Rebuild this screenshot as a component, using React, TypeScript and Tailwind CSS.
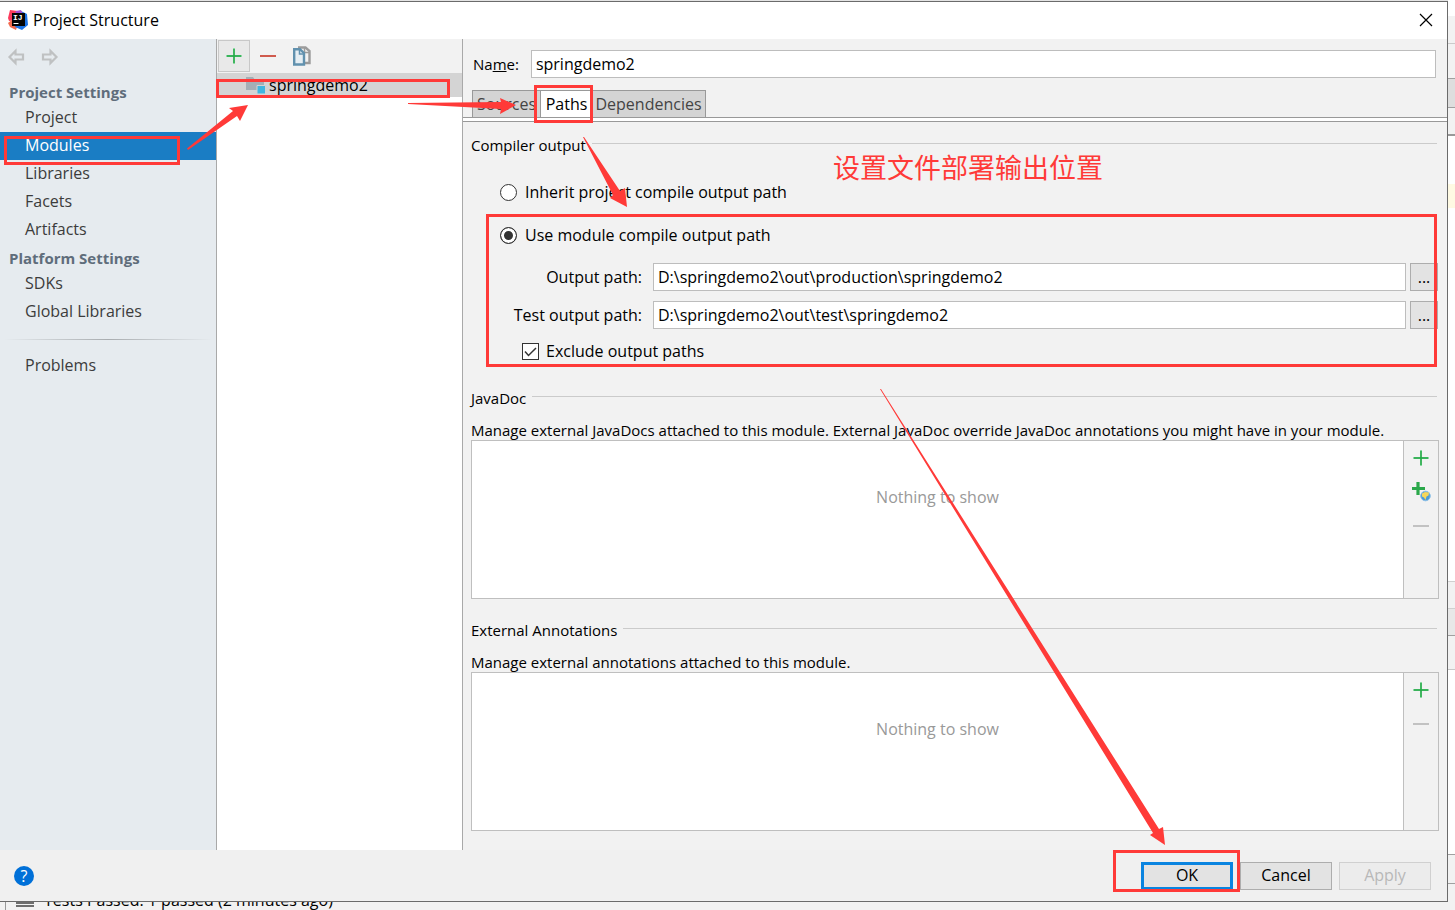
import React, { useState } from 'react';

const inputClass = 'h-7 min-w-0 flex-1 border border-[#bdbdbd] bg-white px-1 text-base text-black outline-none';

const PlusIcon: React.FC = () => (
  <svg width="16" height="16" viewBox="0 0 16 16" aria-hidden="true">
    <path d="M8 0v16M0 8h16" stroke="#8fd9a4" strokeWidth="2" />
    <path d="M8 1v14M1 8h14" stroke="#21a744" strokeWidth="1.4" />
  </svg>
);

const MinusIcon: React.FC<{ color: string }> = ({ color }) => (
  <svg width="16" height="16" viewBox="0 0 16 16" aria-hidden="true">
    <path d="M0 8h16" stroke={color} strokeWidth="2" />
  </svg>
);

const PlusGlobeIcon: React.FC = () => (
  <svg width="20" height="20" viewBox="0 0 20 20" aria-hidden="true">
    <path d="M7 0v13M1 6.5h13" stroke="#2ba84b" strokeWidth="3.2" />
    <circle cx="14.5" cy="14" r="4.800" fill="#4b9bd8" stroke="#8bbfe6" />
    <path d="M11 11.500l3-1.500 4 .5-.5 3-2 1-1 3.500-1.500-2.500-2-1z" fill="#f6d75b" />
  </svg>
);

const CopyIcon: React.FC = () => (
  <svg width="20" height="20" viewBox="0 0 20 20" aria-hidden="true">
    <path d="M6 1.500h7.500L17.500 5v12H12" fill="#f2f2f2" stroke="#9b9b9b" strokeWidth="2.400" />
    <path d="M12.500 2v4.500H17" fill="none" stroke="#9b9b9b" strokeWidth="1.500" />
    <path d="M2.200 3.200H8l4 4v11.300H2.200z" fill="#e6eef3" stroke="#6191ae" strokeWidth="2.400" />
    <path d="M7.500 4v4H12" fill="none" stroke="#6191ae" strokeWidth="1.500" />
  </svg>
);

const ArrowIcon: React.FC<{ flip?: boolean }> = ({ flip }) => (
  <svg width="18" height="18" viewBox="0 0 18 18" className={flip ? 'rotate-180' : ''} aria-hidden="true">
    <path d="M2.500 9L8.500 3v3.500h7.500v5H8.500V15z" fill="none" stroke="#bfc1c2" strokeWidth="2.200" />
  </svg>
);

const LogoIcon: React.FC = () => (
  <svg width="20" height="20" viewBox="0 0 20 20" aria-hidden="true">
    <path d="M2 0l8 1-2 9-7 1-1-3z" fill="#fc3a5c" />
    <path d="M0 13l5-4 4 8-1 3-6-3z" fill="#f26b4e" />
    <path d="M13 1l6 3 1 11-6 5-7-3z" fill="#1b74e8" />
    <path d="M8 1l5-1 2 4H7z" fill="#a54fd1" />
    <rect x="4" y="3" width="13" height="13" fill="#050505" />
    <text x="5" y="10" fill="#fff" fontSize="8" fontWeight="bold" fontFamily="Liberation Mono, monospace">IJ</text>
    <path d="M5.500 13.500h5" stroke="#fff" />
  </svg>
);

const FolderIcon: React.FC = () => (
  <svg width="20" height="18" viewBox="0 0 20 18" aria-hidden="true">
    <path d="M0 1h7l2 3h9v10H0z" fill="#a4afb6" />
    <path d="M11 9.500h8.500V18H11z" fill="#40b6e0" stroke="#d4d4d4" />
  </svg>
);

const sections = [
  { title: 'Project Settings', items: ['Project', 'Modules', 'Libraries', 'Facets', 'Artifacts'] },
  { title: 'Platform Settings', items: ['SDKs', 'Global Libraries'] },
];

const NavItem: React.FC<{ label: string; active?: boolean; onClick: () => void }> = ({ label, active, onClick }) => (
  <button
    type="button"
    onClick={onClick}
    className={`flex h-7 w-full items-center pb-0.5 pl-[25px] text-left ${active ? 'bg-[#1a7dc4] text-white' : 'text-[#3c3c3c]'}`}
  >
    {label}
  </button>
);

const GroupTitle: React.FC<{ children: React.ReactNode }> = ({ children }) => (
  <div className="flex h-6 items-center gap-1.5 pr-0.5">
    <h2 className="text-[15px] leading-5">{children}</h2>
    <div className="mb-[3px] h-px flex-1 bg-[#cbcbcb]" />
  </div>
);

const Description: React.FC<{ children: React.ReactNode }> = ({ children }) => (
  <p className="mt-2.5 text-[15px] leading-5">{children}</p>
);

const EmptyList: React.FC<{ withUrl?: boolean }> = ({ withUrl }) => (
  <div className="flex h-[159px] border border-[#bfbfbf]">
    <div className="flex-1 bg-white pt-[46px] text-center text-[#999999]">Nothing to show</div>
    <div className="flex w-[35px] flex-col items-center border-l border-[#bfbfbf]">
      <button type="button" aria-label="Add" className="flex h-[34px] items-center"><PlusIcon /></button>
      {withUrl && <button type="button" aria-label="Add URL" className="flex h-[34px] items-center"><PlusGlobeIcon /></button>}
      <button type="button" aria-label="Remove" disabled className="flex h-[34px] items-center"><MinusIcon color="#c2c2c2" /></button>
    </div>
  </div>
);

const Annotations: React.FC = () => (
  <div className="pointer-events-none absolute inset-0 text-[#ff3a38]">
    <svg width="1455" height="910" viewBox="0 0 1455 910" aria-hidden="true">
      <g fill="none" stroke="currentColor" strokeWidth="3">
        <rect x="5.5" y="137.5" width="173" height="26" />
        <rect x="217.5" y="80.500" width="231" height="16" />
        <rect x="535.5" y="86.500" width="56" height="35" />
        <rect x="487.5" y="215.500" width="948" height="150" />
        <rect x="1114.500" y="851.500" width="124" height="39" />
      </g>
      <g fill="currentColor">
        <path d="M187 148.500L233 111l-4-3 19-3-8 16-3-5-49 34z" />
        <path d="M408 103l93-1-1-4 16 7-16 9 1-5-93-5z" />
        <path d="M583 137h1l36 54 5-3 2 19-17-9 3-3z" />
        <path d="M880 389h1l278 440 4-2 2 18-15-10 3-2z" />
      </g>
    </svg>
    <p className="absolute top-[147px] left-[833px] font-['Noto_Sans_CJK_SC',sans-serif] text-[27px] leading-10">设置文件部署输出位置</p>
  </div>
);

// slice of the editor that stays visible beside the dialog
const EditorEdge: React.FC = () => (
  <div className="flex w-[7px] flex-col bg-white">
    <div className="h-4" />
    <div className="h-7 border-b border-[#cbcbcb] bg-[#f2f2f2]" />
    <div className="h-[34px] bg-[#f2f2f2]" />
    <div className="h-[30px] border-y border-[#a0a0a0] bg-[#dedede]" />
    <div className="h-7 border-b-2 border-[#999999] bg-[#f2f2f2]" />
    <div className="h-12" />
    <div className="h-6 bg-[#fffae3]" />
    <div className="h-[373px]" />
    <div className="h-7 border-y border-[#d0d0d0] bg-[#f2f2f2]" />
    <div className="h-[27px] border-b border-[#a0a0a0] bg-[#e8e8e8]" />
    <div className="h-[34px] border-b border-[#c8c8c8] bg-[#f2f2f2]" />
    <div className="flex-1" />
    <div className="h-[30px] border-y border-[#a0a0a0] bg-[#f2f2f2]" />
    <div className="h-[26px] bg-[#f2f2f2]" />
  </div>
);

const App: React.FC = () => {
  const [page, setPage] = useState('Modules');
  const [name, setName] = useState('springdemo2');
  const [mode, setMode] = useState<'inherit' | 'module'>('module');
  const [output, setOutput] = useState('D:\\springdemo2\\out\\production\\springdemo2');
  const [testOutput, setTestOutput] = useState('D:\\springdemo2\\out\\test\\springdemo2');
  const [exclude, setExclude] = useState(true);

  const radioClass =
    'h-[17px] w-[17px] appearance-none rounded-full border border-[#333333] bg-white checked:bg-[#333333] checked:shadow-[inset_0_0_0_3px_white]';
  const browseClass = 'h-7 w-7 border border-[#adadad] bg-[#e3e3e3] text-center';

  return (
    <div className="relative flex min-h-screen overflow-hidden bg-[#f2f2f2] font-['Open_Sans','Noto_Sans',sans-serif] text-base leading-5 text-black">
      <div className="flex min-w-0 flex-1 flex-col">
        <div className="h-px bg-[#e4e4e4]" />
        <div className="flex flex-1 flex-col border-t border-r border-b border-[#6b6b6b]">
          {/* Title bar */}
          <header className="flex h-[37px] items-center gap-[5px] bg-white pr-3.5 pb-0.5 pl-2">
            <LogoIcon />
            <h1 className="flex-1 text-base leading-5">Project Structure</h1>
            <button type="button" aria-label="Close">
              <svg width="14" height="14" viewBox="0 0 14 14">
                <path d="M1 1l12 12M13 1L1 13" stroke="#000" strokeWidth="1.200" />
              </svg>
            </button>
          </header>

          <div className="flex flex-1">
            {/* Sidebar */}
            <nav className="flex w-[217px] shrink-0 flex-col border-r border-[#a9a9a9] bg-[#e6ebef]">
              <div className="flex h-[39px] gap-4 pt-[9px] pl-[7px]">
                <button type="button" aria-label="Back" className="h-[18px]"><ArrowIcon /></button>
                <button type="button" aria-label="Forward" className="h-[18px]"><ArrowIcon flip /></button>
              </div>
              {sections.map((section) => (
                <div key={section.title}>
                  <h2 className="flex h-[26px] items-center pt-0.5 pl-[9px] text-[15px] font-bold text-[#5f6d7b]">{section.title}</h2>
                  {section.items.map((item) => (
                    <NavItem key={item} label={item} active={page === item} onClick={() => setPage(item)} />
                  ))}
                </div>
              ))}
              <div className="mx-1 mt-[13px] mb-3 h-px bg-linear-to-r from-transparent via-[#a9adb0] to-transparent" />
              <NavItem label="Problems" active={page === 'Problems'} onClick={() => setPage('Problems')} />
            </nav>

            {/* Module list */}
            <div className="w-[246px] shrink-0 border-r border-[#a9a9a9] bg-white">
              <div className="flex h-[34px] items-center bg-[#f2f2f2] pl-px">
                <button type="button" aria-label="Add module" className="flex h-8 w-8 items-center justify-center border border-[#c8c8c8] bg-[#e9e9e9]">
                  <PlusIcon />
                </button>
                <button type="button" aria-label="Remove module" className="ml-2.5"><MinusIcon color="#d05b4e" /></button>
                <button type="button" aria-label="Copy module" className="ml-4"><CopyIcon /></button>
              </div>
              <button type="button" className="flex h-6 w-full items-center gap-[3px] bg-[#d4d4d4] pl-[29px]">
                <FolderIcon />
                {name}
              </button>
            </div>

            {/* Module settings */}
            <main className="flex min-w-0 flex-1 flex-col">
              <div className="flex items-center gap-3 pt-[11px] pr-[11px] pl-[10px]">
                <label htmlFor="name" className="text-[15px]">Na<u>m</u>e:</label>
                <input id="name" className={inputClass} value={name} onChange={(e) => setName(e.target.value)} />
              </div>
              <div role="tablist" className="mt-3 flex h-[27px] pl-[9px] text-[#444444]">
                <button type="button" role="tab" className="w-[68px] border-t border-l border-[#999999] bg-[#d4d4d4]">Sources</button>
                <button type="button" role="tab" aria-selected="true" className="w-[52px] border-t border-l border-[#999999] bg-white text-black">Paths</button>
                <button type="button" role="tab" className="w-[114px] border-t border-r border-[#999999] bg-[#d4d4d4]">Dependencies</button>
              </div>
              <div className="h-[5px] border-y border-[#999999] bg-white" />

              <div className="px-2 pt-[11px]">
                <GroupTitle>Compiler output</GroupTitle>
                <div className="mt-[21px] space-y-[15px] pl-[29px]">
                  <label className="flex h-7 items-center gap-2">
                    <input type="radio" name="mode" className={radioClass} checked={mode === 'inherit'} onChange={() => setMode('inherit')} />
                    Inherit project compile output path
                  </label>
                  <label className="flex h-7 items-center gap-2">
                    <input type="radio" name="mode" className={radioClass} checked={mode === 'module'} onChange={() => setMode('module')} />
                    Use module compile output path
                  </label>
                </div>
                <div className="mt-3.5 flex items-center gap-1 pr-px">
                  <label htmlFor="output" className="w-[171px] text-right">Output path:</label>
                  <input id="output" className={`ml-[7px] ${inputClass}`} value={output} onChange={(e) => setOutput(e.target.value)} />
                  <button type="button" aria-label="Browse output path" className={browseClass}>...</button>
                </div>
                <div className="mt-2.5 flex items-center gap-1 pr-px">
                  <label htmlFor="testOutput" className="w-[171px] text-right">Test output path:</label>
                  <input id="testOutput" className={`ml-[7px] ${inputClass}`} value={testOutput} onChange={(e) => setTestOutput(e.target.value)} />
                  <button type="button" aria-label="Browse test output path" className={browseClass}>...</button>
                </div>
                <label className="mt-3 flex h-5 items-center gap-[7px] pl-[51px]">
                  <span className="relative flex">
                    <input type="checkbox" className="h-[17px] w-[17px] appearance-none border border-[#333333] bg-white" checked={exclude} onChange={(e) => setExclude(e.target.checked)} />
                    {exclude && (
                      <svg className="pointer-events-none absolute inset-0" width="17" height="17" viewBox="0 0 17 17">
                        <path d="M3 8.500l3.500 4L14 5" fill="none" stroke="#333" strokeWidth="1.500" />
                      </svg>
                    )}
                  </span>
                  Exclude output paths
                </label>

                <div className="mt-[25px]">
                  <GroupTitle>JavaDoc</GroupTitle>
                  <Description>Manage external JavaDocs attached to this module. External JavaDoc override JavaDoc annotations you might have in your module.</Description>
                  <EmptyList withUrl />
                </div>
                <div className="mt-[19px]">
                  <GroupTitle>External Annotations</GroupTitle>
                  <Description>Manage external annotations attached to this module.</Description>
                  <EmptyList />
                </div>
              </div>
            </main>
          </div>

          <footer className="flex h-[51px] items-center gap-[7px] bg-[#f0f0f0] pr-4 pl-3.5">
            <button type="button" aria-label="Help" className="h-5 w-5 rounded-full bg-[#0070d8] text-center text-white">?</button>
            <div className="flex-1" />
            <button type="button" className="h-7 w-[92px] border-3 border-[#0a84e0] bg-[#e3e3e3] pb-0.5">OK</button>
            <button type="button" className="h-7 w-[92px] border border-[#adadad] bg-[#e3e3e3] pb-0.5">Cancel</button>
            <button type="button" disabled className="h-7 w-[92px] border border-[#d0d0d0] bg-[#ececec] pb-0.5 text-[#b8b8b8]">Apply</button>
          </footer>
        </div>
        {/* Status bar peeking out below the dialog */}
        <div className="ml-[5px] flex h-2 items-end gap-2.5 overflow-hidden border-l border-[#999999] pl-2.5">
          <div className="mb-[3px] h-[5px] w-[18px] border-y-2 border-[#6e6e6e]" />
          <span>Tests Passed: 1 passed (2 minutes ago)</span>
        </div>
      </div>
      <EditorEdge />
      <Annotations />
    </div>
  );
};

export default App;
